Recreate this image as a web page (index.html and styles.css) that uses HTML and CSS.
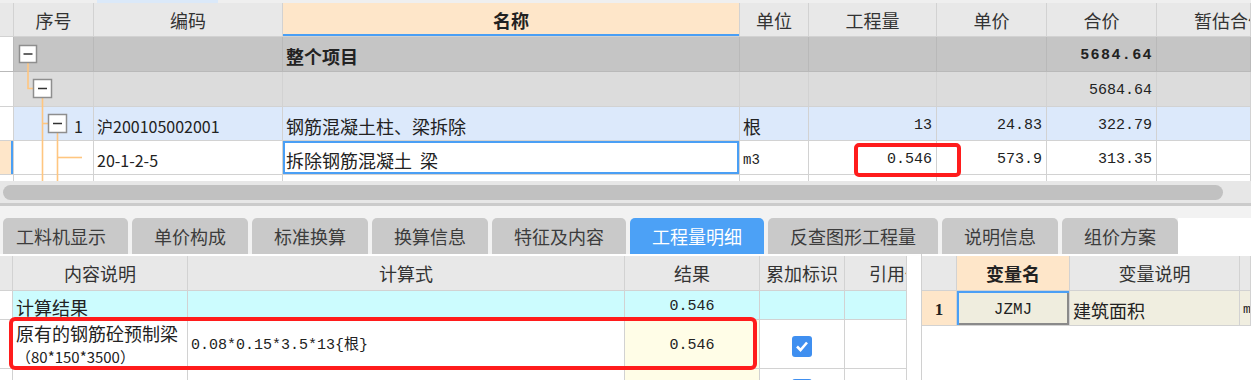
FILE: index.html
```html
<!DOCTYPE html>
<html lang="zh-CN">
  <head>
    <meta charset="UTF-8" />
    <title>工程量明细</title>
    <link rel="stylesheet" href="styles.css">
  </head>
  <body>
    <div class="top-strip"><span></span></div>

    <div class="grid-wrap">
      <table class="grid">
        <colgroup>
          <col class="c-rh" /><col class="c-no" /><col class="c-code" /><col class="c-name" />
          <col class="c-unit" /><col class="c-qty" /><col class="c-price" /><col class="c-sum" /><col class="c-est" />
        </colgroup>
        <tr class="head">
          <th></th>
          <th>序号</th>
          <th>编码</th>
          <th class="th-name">名称</th>
          <th>单位</th>
          <th>工程量</th>
          <th>单价</th>
          <th>合价</th>
          <th class="th-cut">暂估合价</th>
        </tr>
        <tr class="r-total">
          <td class="rh"></td>
          <td></td>
          <td></td>
          <td class="bold">整个项目</td>
          <td></td>
          <td></td>
          <td></td>
          <td class="num bold-num">5684.64</td>
          <td></td>
        </tr>
        <tr class="r-sub">
          <td class="rh"></td>
          <td></td>
          <td></td>
          <td></td>
          <td></td>
          <td></td>
          <td></td>
          <td class="num">5684.64</td>
          <td></td>
        </tr>
        <tr class="r-item">
          <td class="rh"></td>
          <td class="seq">1</td>
          <td class="code">沪200105002001</td>
          <td>钢筋混凝土柱、梁拆除</td>
          <td>根</td>
          <td class="num">13</td>
          <td class="num">24.83</td>
          <td class="num">322.79</td>
          <td></td>
        </tr>
        <tr class="r-sel">
          <td class="rh rh-cur"></td>
          <td></td>
          <td class="code">20-1-2-5</td>
          <td class="cell-sel">拆除钢筋混凝土&nbsp;&nbsp;梁</td>
          <td class="unit-m">m3</td>
          <td class="num">0.546</td>
          <td class="num">573.9</td>
          <td class="num">313.35</td>
          <td></td>
        </tr>
        <tr class="r-next">
          <td></td><td></td><td></td><td></td><td></td><td></td><td></td><td></td><td></td>
        </tr>
      </table>

      <svg class="tree" width="100" height="178" viewBox="0 0 100 178">
        <g stroke="#ffc680" stroke-width="1.6" fill="none">
          <path d="M28 60 V85.5 H33" />
          <path d="M42.5 94.5 V178" />
          <path d="M42.5 120.5 H48" />
          <path d="M57.5 129 V178" />
          <path d="M57.5 154.5 H82" />
        </g>
        <g fill="#fff" stroke="#8e8e8e" stroke-width="1.5">
          <rect x="19.5" y="42.5" width="17" height="17" />
          <rect x="33.5" y="76.5" width="18" height="18" />
          <rect x="48.5" y="111.5" width="18" height="18" />
        </g>
        <g stroke="#333" stroke-width="1.5">
          <path d="M23.5 51 H32.5" />
          <path d="M38 85.5 H47" />
          <path d="M53 120.5 H62" />
        </g>
      </svg>

      <div class="mark mark-qty"></div>
    </div>

    <div class="hscroll"><div class="thumb"></div></div>

    <div class="tabs">
      <div class="tab tab-first">工料机显示</div>
      <div class="tab">单价构成</div>
      <div class="tab">标准换算</div>
      <div class="tab">换算信息</div>
      <div class="tab">特征及内容</div>
      <div class="tab tab-active">工程量明细</div>
      <div class="tab">反查图形工程量</div>
      <div class="tab">说明信息</div>
      <div class="tab">组价方案</div>
      <div class="tab-fill"></div>
    </div>

    <div class="lower">
      <div class="detail-wrap">
        <table class="detail">
          <colgroup>
            <col class="d-rh" /><col class="d-desc" /><col class="d-expr" /><col class="d-res" /><col class="d-acc" /><col class="d-ref" />
          </colgroup>
          <tr class="head">
            <th></th>
            <th>内容说明</th>
            <th>计算式</th>
            <th>结果</th>
            <th>累加标识</th>
            <th class="th-ref">引用代码</th>
          </tr>
          <tr class="d-total">
            <td class="rh"></td>
            <td>计算结果</td>
            <td></td>
            <td class="num center">0.546</td>
            <td></td>
            <td></td>
          </tr>
          <tr class="d-row">
            <td class="rh"></td>
            <td class="desc">
              <div class="desc-name">原有的钢筋砼预制梁</div>
              <div class="desc-size">（80*150*3500）</div>
            </td>
            <td class="expr">0.08*0.15*3.5*13{根}</td>
            <td class="num center res">0.546</td>
            <td class="center"><span class="check"><svg width="20" height="20" viewBox="0 0 20 20"><path d="M5 10.5 L8.5 14 L15 6.5" stroke="#fff" stroke-width="2.6" fill="none" /></svg></span></td>
            <td></td>
          </tr>
          <tr class="d-next">
            <td class="rh"></td>
            <td></td>
            <td></td>
            <td class="res"></td>
            <td class="center"><span class="check"><svg width="20" height="20" viewBox="0 0 20 20"><path d="M5 10.5 L8.5 14 L15 6.5" stroke="#fff" stroke-width="2.6" fill="none" /></svg></span></td>
            <td></td>
          </tr>
        </table>
        <div class="mark mark-row"></div>
      </div>

      <div class="lower-gap"></div>

      <div class="vars">
        <table class="var-table">
          <colgroup>
            <col class="v-rh" /><col class="v-name" /><col class="v-desc" /><col class="v-more" />
          </colgroup>
          <tr class="head">
            <th></th>
            <th class="th-var">变量名</th>
            <th>变量说明</th>
            <th></th>
          </tr>
          <tr class="v-row">
            <td class="rowno">1</td>
            <td class="var-sel">JZMJ</td>
            <td>建筑面积</td>
            <td class="v-unit">m2</td>
          </tr>
        </table>
      </div>
    </div>
  </body>
</html>
```

FILE: styles.css
```css
* {
  margin: 0;
  padding: 0;
  box-sizing: border-box;
}

body {
  width: 1251px;
  height: 380px;
  overflow: hidden;
  background: #fff;
  font-family: "Noto Sans CJK SC", "Noto Sans", sans-serif;
  font-size: 18px;
  color: #222;
}

/* strip left over from the row above */
.top-strip {
  height: 3px;
  background: #efefef;
  padding-left: 97px;
}

.top-strip span {
  display: block;
  width: 121px;
  height: 3px;
  background: #dbe9f9;
}

table {
  border-collapse: separate;
  border-spacing: 0;
  table-layout: fixed;
}

th,
td {
  border-right: 1px solid #d2d2d2;
  border-bottom: 1px solid #d2d2d2;
  padding: 0 3px;
  line-height: 20px;
  white-space: nowrap;
  overflow: hidden;
  vertical-align: middle;
  text-align: left;
}

th {
  background: #e8e8e8;
  color: #333;
  font-weight: normal;
  text-align: center;
}

.num {
  font-family: "Liberation Mono", monospace;
  font-size: 15px;
  text-align: right;
  padding-right: 4px;
}

.center {
  text-align: center;
  padding-right: 3px;
}

.bold {
  font-weight: bold;
}

/* upper grid */
.grid-wrap {
  position: relative;
  height: 178px;
  overflow: hidden;
}

.grid {
  width: 1251px;
}

.c-rh { width: 14px; }
.c-no { width: 80px; }
.c-code { width: 189px; }
.c-name { width: 457px; }
.c-unit { width: 69px; }
.c-qty { width: 128px; }
.c-price { width: 110px; }
.c-sum { width: 110px; }
.c-est { width: 94px; }

.grid .head { height: 34px; }

.grid td {
  padding-top: 4px;
}

.th-name {
  background: #fee6c9;
  font-weight: bold;
  color: #222;
  box-shadow: inset 0 -2px 0 #4a9ff5;
}

.th-cut {
  text-align: left;
  padding-left: 37px;
}

.r-total { height: 35px; }
.r-total td {
  background: #c5c5c5;
  border-color: #b9b9b9;
}

.r-sub { height: 35px; }
.r-sub td { background: #dcdcdc; }

.r-item { height: 34px; }
.r-item td { background: #dce9fb; }

.r-sel { height: 34px; }
.r-next { height: 34px; }

.grid td.rh {
  background: #fff;
}

.grid td.rh-cur {
  background: #fee6c9;
  box-shadow: inset -2px 0 0 #4a9ff5;
}

.bold-num {
  font-weight: bold;
  letter-spacing: 1.4px;
  padding-right: 3px;
}

.seq {
  padding-left: 60px;
  font-size: 16px;
}

.code {
  font-size: 16px;
}

.unit-m {
  font-family: "Liberation Mono", monospace;
  font-size: 14px;
}

.cell-sel {
  box-shadow: inset 0 0 0 2px #4a9ff5;
}

.tree {
  position: absolute;
  left: 0;
  top: 0;
  pointer-events: none;
}

/* red annotation frames */
.mark {
  position: absolute;
  border: 4px solid #ff1c1c;
  border-radius: 5px;
  pointer-events: none;
}

.mark-qty {
  left: 854px;
  top: 140px;
  width: 107px;
  height: 34px;
}

.mark-row {
  left: 9px;
  top: 63px;
  width: 748px;
  height: 53px;
  border-radius: 6px;
}

/* horizontal scrollbar */
.hscroll {
  height: 25px;
  background: #e7e7e7;
  border-bottom: 3px solid #cbcbcb;
  padding: 4px 0 0 3px;
}

.thumb {
  width: 1220px;
  height: 15px;
  border-radius: 8px;
  background: #c1c1c1;
}

/* tabs */
.tabs {
  display: flex;
  height: 48px;
  padding-top: 12px;
  background: #f2f2f2;
}

.tab {
  margin-left: 4px;
  padding: 0 22px;
  height: 36px;
  line-height: 36px;
  background: #c9c9c9;
  border-radius: 5px 5px 0 0;
  color: #3c3c3c;
  white-space: nowrap;
}

.tab-first {
  margin-left: 3px;
  padding-left: 13px;
}

.tab-active {
  background: #4ca1f6;
  color: #fff;
}

.tab-fill {
  flex: 1;
  background: #fff;
}

/* lower panels */
.lower {
  display: flex;
  height: 126px;
  overflow: hidden;
  background: #fff;
}

.detail-wrap {
  position: relative;
  width: 907px;
  padding-top: 2px;
}

.detail {
  width: 907px;
}

.d-rh { width: 13px; }
.d-desc { width: 175px; }
.d-expr { width: 437px; }
.d-res { width: 135px; }
.d-acc { width: 85px; }
.d-ref { width: 62px; }

.detail .head { height: 35px; }

.detail td {
  padding-top: 3px;
}

.th-ref {
  text-align: left;
  padding-left: 24px;
}

.d-total { height: 29px; }
.d-total td {
  background: #ccfcfe;
}

.detail td.rh {
  background: #fff;
}

.d-row { height: 49px; }
.d-next { height: 35px; }

.detail td.desc {
  padding-top: 0;
}

.desc-name {
  line-height: 26px;
}

.desc-size {
  font-size: 15px;
  line-height: 22px;
}

.expr {
  font-family: "Liberation Mono", "Noto Sans CJK SC", monospace;
  font-size: 15px;
}

.res {
  background: #fffde7;
}

.check {
  display: inline-block;
  width: 20px;
  height: 21px;
  border-radius: 3px;
  background: #3f8ff0;
  vertical-align: middle;
}

.check svg {
  display: block;
}

.d-next td {
  vertical-align: top;
  padding-top: 7px;
}

.lower-gap {
  width: 14px;
}

.vars {
  width: 330px;
  border-left: 1px solid #d0d0d0;
  padding-top: 2px;
}

.var-table {
  width: 329px;
}

.v-rh { width: 35px; }
.v-name { width: 113px; }
.v-desc { width: 170px; }
.v-more { width: 11px; }

.var-table .head { height: 35px; }

.th-var {
  background: #fee6c9;
  font-weight: bold;
  color: #222;
}

.v-row { height: 35px; }

.v-row td {
  background: #f0eee0;
  padding-top: 3px;
}

.var-table td.rowno {
  background: #fee6c9;
  font-family: "Liberation Serif", serif;
  font-weight: bold;
  font-size: 17px;
  text-align: center;
}

.var-table td.var-sel {
  background: #efedde;
  box-shadow: inset 2px 2px 0 #4a9ff5, inset -2px -2px 0 #8a8a8a;
  font-family: "Liberation Mono", monospace;
  font-size: 16px;
  text-align: center;
}

.v-unit {
  font-family: "Liberation Mono", monospace;
  font-size: 13px;
}
```
